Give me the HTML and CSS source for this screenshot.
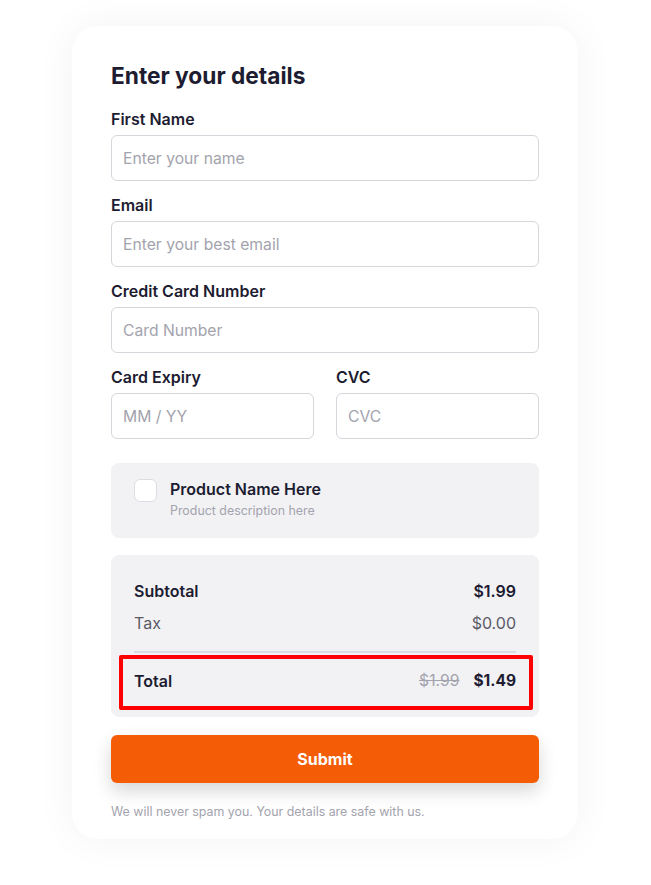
FILE: index.html
```html
<!DOCTYPE html>
<html lang="en">
<head>
<meta charset="utf-8">
<title>Enter your details</title>
<link rel="stylesheet" href="styles.css">
</head>
<body>
<div class="card">
  <h1 class="title">Enter your details</h1>
  <div class="field">
    <label class="label">First Name</label>
    <input class="input" type="text" placeholder="Enter your name">
  </div>
  <div class="field">
    <label class="label">Email</label>
    <input class="input" type="text" placeholder="Enter your best email">
  </div>
  <div class="field">
    <label class="label">Credit Card Number</label>
    <input class="input" type="text" placeholder="Card Number">
  </div>
  <div class="row">
    <div class="field">
      <label class="label">Card Expiry</label>
      <input class="input" type="text" placeholder="MM / YY">
    </div>
    <div class="field">
      <label class="label">CVC</label>
      <input class="input" type="text" placeholder="CVC">
    </div>
  </div>
  <div class="product">
    <span class="check"></span>
    <div class="product-text">
      <div class="product-name">Product Name Here</div>
      <div class="product-desc">Product description here</div>
    </div>
  </div>
  <div class="summary">
    <div class="line strong"><span>Subtotal</span><span>$1.99</span></div>
    <div class="line light"><span>Tax</span><span>$0.00</span></div>
    <div class="divider"></div>
    <div class="total">
      <span>Total</span>
      <span class="prices"><s class="old">$1.99</s><span>$1.49</span></span>
    </div>
  </div>
  <button class="submit">Submit</button>
  <p class="note">We will never spam you. Your details are safe with us.</p>
</div>
</body>
</html>
```
FILE: styles.css
```css
* { box-sizing: border-box; }
html, body { margin: 0; padding: 0; background: #ffffff; }
body {
  font-family: Inter, "Noto Sans", sans-serif;
  color: #1d1c31;
  padding: 26px 0 40px 72px;
}
.card {
  width: 506px;
  background: #fff;
  border-radius: 26px;
  padding: 36px 39px 19px;
  box-shadow: 0 0 40px rgba(0, 0, 0, 0.05);
}
.title {
  margin: 0 0 19px;
  font-size: 22.7px;
  line-height: 28px;
  font-weight: 700;
}
.field {
  display: flex;
  flex-direction: column;
  margin-bottom: 14px;
}
.label {
  font-size: 16px;
  line-height: 20px;
  font-weight: 600;
  margin-bottom: 6px;
}
.input {
  height: 46px;
  border: 1px solid #d6d6dc;
  border-radius: 6px;
  padding: 0 11px;
  font-family: inherit;
  font-size: 15.7px;
  color: #1d1c31;
  background: #fff;
  width: 100%;
}
.input::placeholder { color: #a3a3ad; }
.row {
  display: grid;
  grid-template-columns: 1fr 1fr;
  column-gap: 22px;
  margin-bottom: 10px;
}
.product {
  display: flex;
  align-items: flex-start;
  gap: 13px;
  background: #f2f2f5;
  border-radius: 8px;
  padding: 16px 23px 19px;
  margin-bottom: 17px;
}
.check {
  width: 23px;
  height: 23px;
  background: #fff;
  border: 1px solid #dcdce2;
  border-radius: 6px;
  flex: none;
}
.product-name {
  font-size: 16px;
  line-height: 21px;
  font-weight: 600;
}
.product-desc {
  font-size: 12.4px;
  line-height: 16px;
  color: #a3a3ad;
  margin-top: 3px;
}
.summary {
  background: #f2f2f5;
  border-radius: 8px;
  padding: 25px 23px 7px;
  margin-bottom: 18px;
}
.line {
  display: flex;
  justify-content: space-between;
  font-size: 16px;
  line-height: 22px;
}
.line + .line { margin-top: 10px; }
.strong { font-weight: 600; }
.light { color: #5a5a66; }
.divider {
  height: 2px;
  background: #dcdce0;
  margin: 17px 0 2px;
}
.total {
  display: flex;
  justify-content: space-between;
  align-items: center;
  height: 55px;
  border: 4px solid #ff0000;
  border-radius: 2px;
  margin: 0 -17px 0 -15px;
  padding: 0 13px 4px 11px;
  font-size: 16px;
  font-weight: 600;
}
.prices {
  display: flex;
  align-items: center;
  gap: 14px;
  font-size: 15.5px;
  font-weight: 700;
}
.old {
  font-weight: 400;
  color: #a3a3ad;
  font-size: 15.7px;
}
.submit {
  display: block;
  width: 100%;
  height: 48px;
  border: 0;
  border-radius: 6px;
  background: #f55c06;
  color: #fff;
  font-family: inherit;
  font-size: 16px;
  font-weight: 700;
  box-shadow: 0 8px 18px rgba(0, 0, 0, 0.16);
}
.note {
  margin: 21px 0 0;
  font-size: 12.4px;
  line-height: 16px;
  color: #a3a3ad;
}
```
